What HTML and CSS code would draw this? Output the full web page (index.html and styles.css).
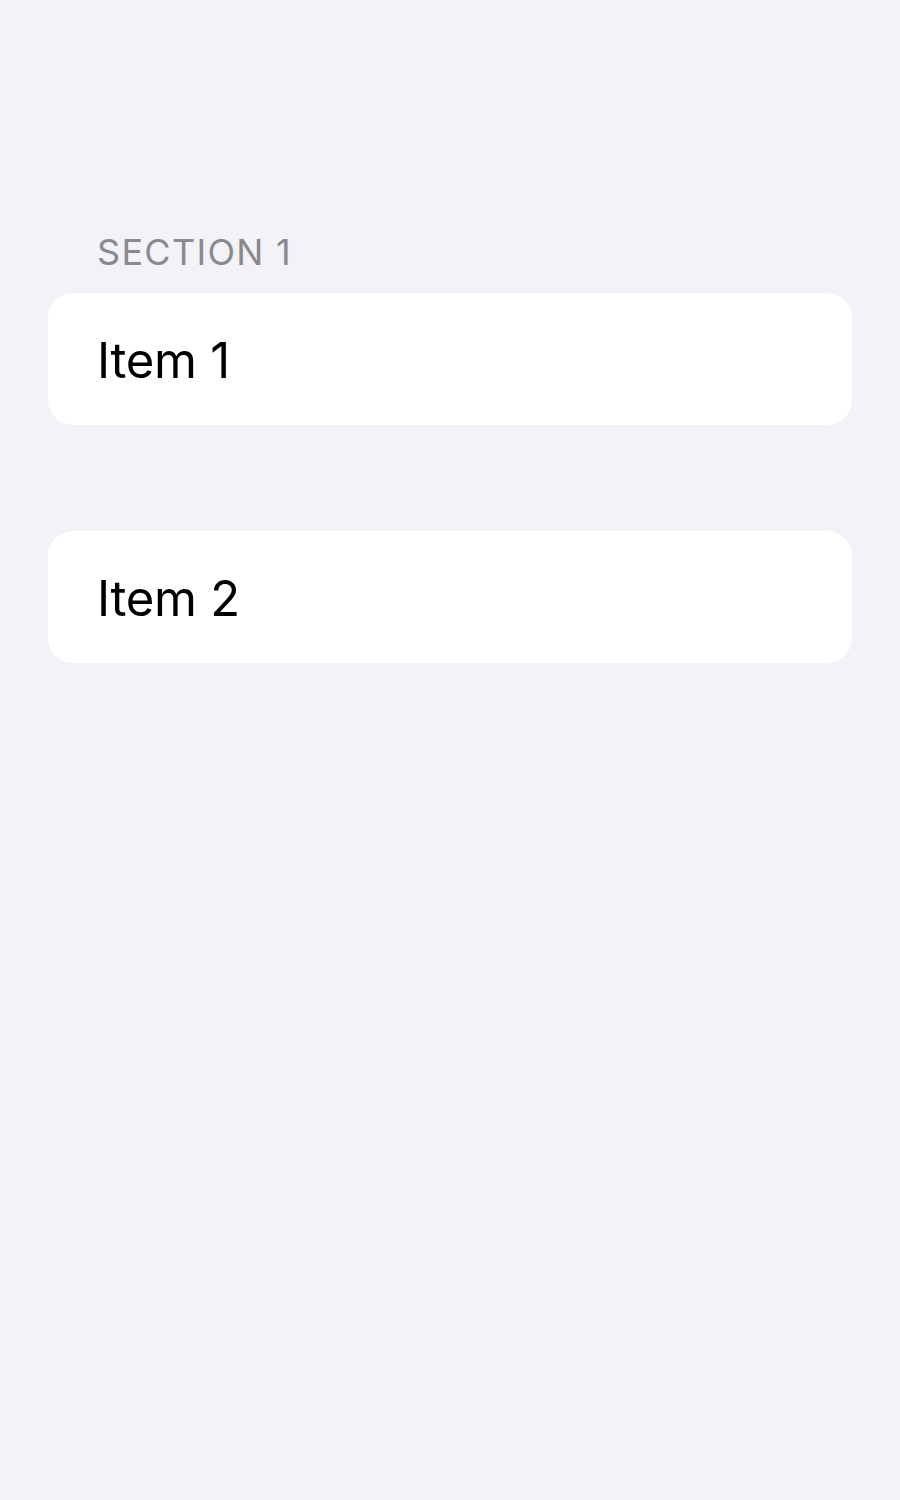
FILE: index.html
```html
<!DOCTYPE html>
<html>
<head>
<meta charset="utf-8">
<link rel="stylesheet" href="styles.css">
</head>
<body>
<main class="list">
  <section class="group first">
    <h2 class="group-header">SECTION 1</h2>
    <div class="card"><span class="cell-label">Item 1</span></div>
  </section>
  <section class="group">
    <div class="card"><span class="cell-label">Item 2</span></div>
  </section>
</main>
</body>
</html>
```
FILE: styles.css
```css
html, body {
  margin: 0;
  padding: 0;
  background: #f2f2f7;
  height: 100%;
}
body {
  font-family: Inter, "Noto Sans", sans-serif;
  -webkit-font-smoothing: antialiased;
}
.list {
  display: flex;
  flex-direction: column;
  padding: 231px 48px 0;
  gap: 106px;
}
.group {
  display: flex;
  flex-direction: column;
}
.group-header {
  margin: 0 0 20px 49px;
  font-size: 36px;
  line-height: 42px;
  font-weight: 400;
  color: #8a8a8e;
  letter-spacing: 1.3px;
}
.card {
  background: #ffffff;
  border-radius: 25px;
  height: 132px;
  display: flex;
  align-items: center;
  padding: 0 49px;
}
.cell-label {
  font-size: 49px;
  color: #000;
  line-height: 1;
  letter-spacing: -0.3px;
  position: relative;
  top: 1px;
}
```
